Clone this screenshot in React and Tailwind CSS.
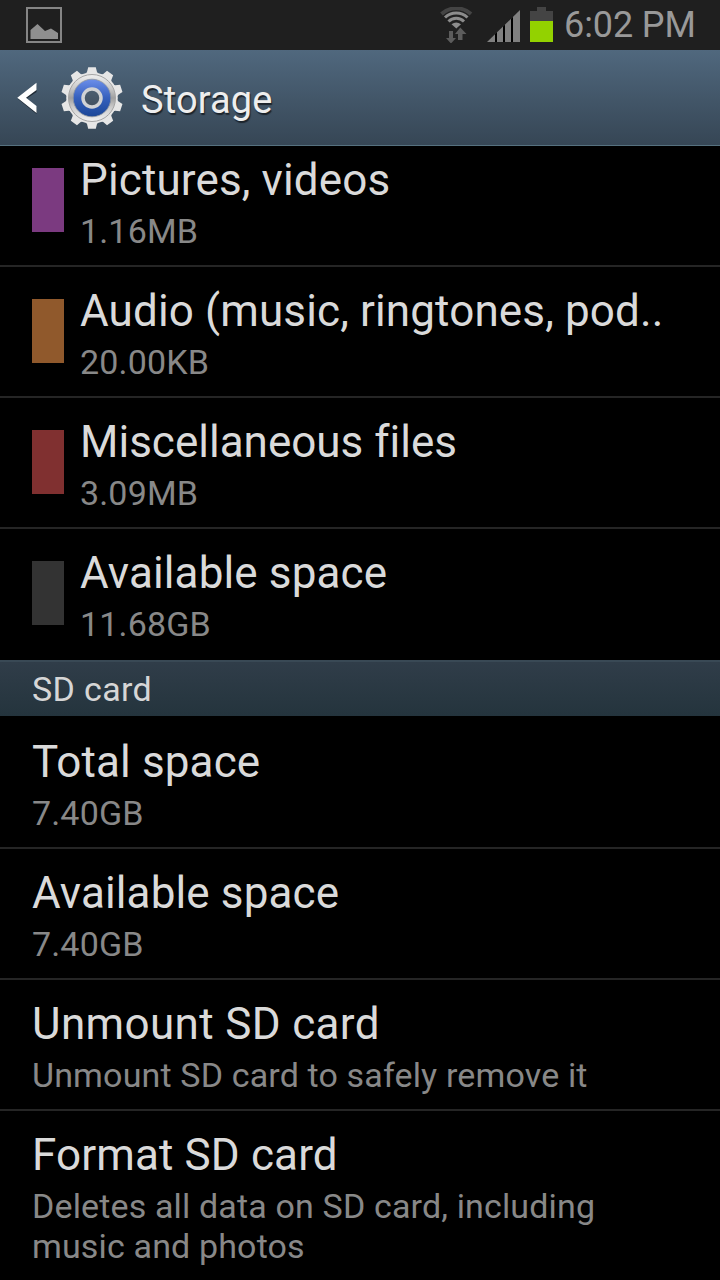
import React from "react";

const internalItems = [
  { title: "Pictures, videos", summary: "1.16MB", color: "bg-[#7b3a80]" },
  { title: "Audio (music, ringtones, pod..", summary: "20.00KB", color: "bg-[#90592c]" },
  { title: "Miscellaneous files", summary: "3.09MB", color: "bg-[#803030]", tracking: "tracking-[0.01px]" },
  { title: "Available space", summary: "11.68GB", color: "bg-[#333333]" },
];

const sdCardItems = [
  { title: "Total space", summary: "7.40GB" },
  { title: "Available space", summary: "7.40GB" },
  { title: "Unmount SD card", summary: "Unmount SD card to safely remove it", tracking: "tracking-[0.35px]" },
  { title: "Format SD card", summary: "Deletes all data on SD card, including music and photos" },
];

// Ten teeth around the gear, one every 36 degrees
const teeth = [0, 36, 72, 108, 144, 180, 216, 252, 288, 324];

function PictureIcon() {
  return (
    <svg width="38" height="38" viewBox="0 0 38 38">
      <rect x="2" y="2" width="34" height="34" fill="none" stroke="#858585" strokeWidth="2" />
      <path d="M5.500 33V24L12.500 18L20 25L26 22.500L33 27V33Z" fill="#8f8f8f" />
    </svg>
  );
}

function WifiIcon() {
  return (
    <svg width="33" height="36" viewBox="0 0 33 36" fill="none">
      <path d="M1.500 7A22 22 0 0 1 31 7" stroke="#444444" strokeWidth="4" />
      <path d="M5 10.500A16 16 0 0 1 27.500 10.500" stroke="#8c8c8c" strokeWidth="3" />
      <path d="M8.500 14.500A11 11 0 0 1 24 14.500" stroke="#8c8c8c" strokeWidth="3" />
      <path d="M11.500 17.300Q16.300 13.500 21 17.300L16.300 21.500Z" fill="#8c8c8c" />
      <path d="M9 24H13V31H16L11 36.500L6 31H9Z" fill="#5c5c5c" />
      <path d="M18 33H22.500V27H26.500L20.300 20.500L15 27H18Z" fill="#5c5c5c" />
    </svg>
  );
}

function SignalIcon() {
  return (
    <svg width="33" height="32" viewBox="0 0 33 32">
      <path d="M0 32L33 0V32Z" fill="#808080" />
      <path d="M8 24L10 22V32H8ZM16 16.500L18 14.500V32H16ZM24 8.700L26 6.700V32H24Z" fill="#000000" />
    </svg>
  );
}

function BatteryIcon() {
  return (
    <svg width="23" height="35" viewBox="0 0 23 35" shapeRendering="crispEdges">
      <path d="M7 0H16V4H23V14H0V4H7Z" fill="#444444" />
      <rect y="14" width="23" height="21" fill="#93d200" />
    </svg>
  );
}

function GearIcon() {
  return (
    <svg width="64" height="64" viewBox="-32 -32 64 64">
      <defs>
        <linearGradient id="metal" x1="0" y1="0" x2="0" y2="1">
          <stop offset="0" stopColor="#f0f0f0" />
          <stop offset="0.3" stopColor="#c9c9c9" />
          <stop offset="0.5" stopColor="#a0a0a0" />
          <stop offset="0.7" stopColor="#cccccc" />
          <stop offset="1" stopColor="#f2f2f2" />
        </linearGradient>
        <linearGradient id="blue" x1="0" y1="0" x2="0" y2="1">
          <stop offset="0" stopColor="#6c8fea" />
          <stop offset="0.5" stopColor="#3560bd" />
          <stop offset="1" stopColor="#1b4797" />
        </linearGradient>
        <linearGradient id="hole" x1="0" y1="0" x2="0" y2="1">
          <stop offset="0" stopColor="#4c6072" />
          <stop offset="1" stopColor="#42505f" />
        </linearGradient>
      </defs>
      <g fill="#e6e6e6">
        {teeth.map((angle) => (
          <path key={angle} transform={`rotate(${angle})`} d="M-7 -23L-5 -26L-3.800 -30.800H3.800L5 -26L7 -23Z" />
        ))}
        <circle r="25.800" />
      </g>
      <circle r="23.500" fill="url(#metal)" stroke="#a5a5a5" strokeWidth="1" />
      <circle r="18.800" fill="url(#blue)" stroke="#8e969f" strokeWidth="0.800" />
      <circle r="9" fill="url(#hole)" stroke="#d0d2d4" strokeWidth="3.500" />
    </svg>
  );
}

function StatusBar() {
  return (
    <div className="flex h-[50px] shrink-0 items-center bg-[#1f1f1f] pl-[25px] pr-6">
      <PictureIcon />
      <div className="ml-auto flex items-center">
        <WifiIcon />
        <div className="ml-3.5 mt-0.5">
          <SignalIcon />
        </div>
        <div className="ml-2.5 mt-[7px] self-start">
          <BatteryIcon />
        </div>
        <span className="ml-[11px] w-[132px] whitespace-nowrap text-[36px] leading-[50px] tracking-[-0.1px] text-[#999999]">6:02 PM</span>
      </div>
    </div>
  );
}

function ActionBar() {
  return (
    <div className="flex h-24 shrink-0 items-center border-b border-[#56717f] bg-linear-to-b from-[#50687e] to-[#364655] pl-[17px]">
      <svg width="20" height="32" viewBox="0 0 20 32">
        <path d="M19.500 3V10L9 17L19.500 25V32L1 17Z" fill="#1f2a35" />
        <path d="M19.500 0.800V8L9 15.800L19.500 24V31L0.300 15.800Z" fill="#ffffff" />
      </svg>
      <div className="ml-[23px]">
        <GearIcon />
      </div>
      <h1 className="ml-[17px] pt-1 text-[38px] leading-[48px] tracking-[0.15px] text-[#eeeeee] [text-shadow:1px_2px_1px_#1c242c]">Storage</h1>
    </div>
  );
}

function StorageRow({ title, summary, color, tracking = "tracking-[0.13px]", last }) {
  return (
    <li className={`flex min-h-[131px] shrink-0 px-8 ${last ? "" : "border-b-2 border-[#252525]"}`}>
      {color && <div className={`mr-4 mt-8 h-16 w-8 ${color}`} />}
      <div className="flex-1 pt-[17px]">
        <p className={`whitespace-nowrap text-[44px] leading-[54px] text-[#dadada] ${tracking}`}>{title}</p>
        <p className="mt-1 text-[34px] leading-10 tracking-[0.15px] text-[#888888]">{summary}</p>
      </div>
    </li>
  );
}

function App() {
  return (
    <div className="flex h-[1280px] w-[720px] flex-col overflow-hidden bg-black font-['Roboto',sans-serif]">
      <StatusBar />
      <ActionBar />
      <main className="flex-1 overflow-hidden">
        {/* list is scrolled a little, so the first row starts under the action bar */}
        <ul className="-mt-2.5">
          {internalItems.map((item, i) => (
            <StorageRow key={item.title} {...item} last={i === internalItems.length - 1} />
          ))}
        </ul>
        <h2 className="mb-0.5 h-14 border-t-2 border-[#394955] bg-linear-to-b from-[#303d49] to-[#24343d] px-8 text-[34px] leading-[55px] tracking-[0.35px] text-[#d6d6d6]">
          SD card
        </h2>
        <ul>
          {sdCardItems.map((item, i) => (
            <StorageRow key={item.title} {...item} last={i === sdCardItems.length - 1} />
          ))}
        </ul>
      </main>
    </div>
  );
}

export default App;
